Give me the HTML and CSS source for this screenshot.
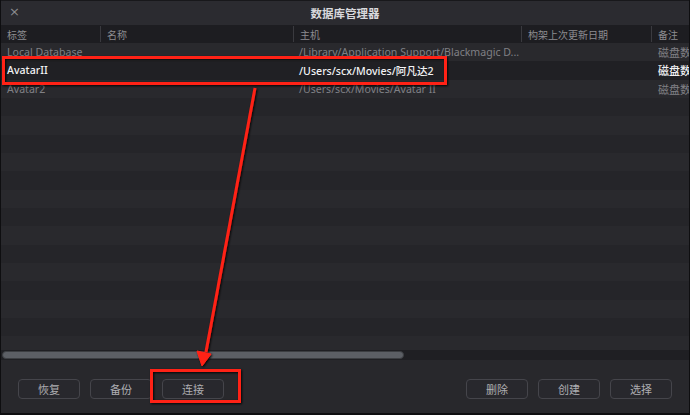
FILE: index.html
```html
<!DOCTYPE html>
<html lang="zh">
<head>
<meta charset="utf-8">
<title>数据库管理器</title>
<link rel="stylesheet" href="styles.css">
</head>
<body>
<div class="window">
  <div class="titlebar">
    <span class="close">×</span>
    <span class="title">数据库管理器</span>
  </div>
  <div class="table">
    <div class="row head">
      <div class="c c1">标签</div>
      <div class="c c2">名称</div>
      <div class="c c3">主机</div>
      <div class="c c4">构架上次更新日期</div>
      <div class="c c5">备注</div>
    </div>
    <div class="body">
      <div class="row odd">
        <div class="c c1">Local Database</div>
        <div class="c c2"></div>
        <div class="c c3">/Library/Application Support/Blackmagic D...</div>
        <div class="c c4"></div>
        <div class="c c5">磁盘数</div>
      </div>
      <div class="row sel">
        <div class="c c1">AvatarII</div>
        <div class="c c2"></div>
        <div class="c c3">/Users/scx/Movies/阿凡达2</div>
        <div class="c c4"></div>
        <div class="c c5">磁盘数</div>
      </div>
      <div class="row odd">
        <div class="c c1">Avatar2</div>
        <div class="c c2"></div>
        <div class="c c3">/Users/scx/Movies/Avatar II</div>
        <div class="c c4"></div>
        <div class="c c5">磁盘数</div>
      </div>
      <div class="row even"></div>
      <div class="row odd"></div>
      <div class="row even"></div>
      <div class="row odd"></div>
      <div class="row even"></div>
      <div class="row odd"></div>
      <div class="row even"></div>
      <div class="row odd"></div>
      <div class="row even"></div>
      <div class="row odd"></div>
      <div class="row even"></div>
      <div class="row odd"></div>
      <div class="row even"></div>
      <div class="row odd"></div>
    </div>
  </div>
  <div class="hscroll"><div class="thumb"></div></div>
  <div class="footer">
    <div class="group">
      <button class="btn">恢复</button>
      <button class="btn">备份</button>
      <button class="btn">连接</button>
    </div>
    <div class="group">
      <button class="btn">删除</button>
      <button class="btn">创建</button>
      <button class="btn">选择</button>
    </div>
  </div>
  <svg class="overlay" width="690" height="415" viewBox="0 0 690 415">
    <defs>
      <filter id="sh" x="-10%" y="-10%" width="120%" height="120%">
        <feDropShadow dx="1" dy="1" stdDeviation="1" flood-color="#000" flood-opacity="0.9"/>
      </filter>
    </defs>
    <g filter="url(#sh)" stroke="#ff2216" fill="none" stroke-width="3">
      <rect x="3.5" y="57.5" width="442" height="26"/>
      <rect x="151.5" y="370.5" width="88" height="31"/>
      <line x1="255" y1="88" x2="206" y2="352"/>
      <polygon points="197,351 211,354 202,366" fill="#ff2216" stroke="#ff2216" stroke-width="1" stroke-linejoin="round"/>
    </g>
  </svg>
</div>
</body>
</html>
```
FILE: styles.css
```css
* { box-sizing: border-box; }
html, body { margin: 0; padding: 0; background: #0b0b0d; }
body {
  width: 690px;
  height: 415px;
  overflow: hidden;
  font-family: "Noto Sans", "Noto Sans CJK SC", sans-serif;
}
.window {
  position: relative;
  width: 690px;
  height: 415px;
  background: #28282c;
  border-left: 1px solid #0e0e10;
  border-right: 1px solid #0e0e10;
  border-bottom: 2px solid #0e0e10;
  display: flex;
  flex-direction: column;
}
.titlebar {
  height: 25px;
  flex: none;
  background: #2b2b30;
  display: flex;
  align-items: center;
  justify-content: center;
  position: relative;
  border-top: 1px solid #18181b;
}
.close {
  position: absolute;
  left: 8px;
  top: 3px;
  color: #8a8a8e;
  font-family: "DejaVu Sans", sans-serif;
  font-size: 13px;
  line-height: 16px;
}
.title {
  color: #d8d8dc;
  font-size: 11.5px;
  font-weight: bold;
  font-family: "Noto Sans CJK SC", sans-serif;
}
.table {
  flex: none;
  height: 325px;
  overflow: hidden;
  background: #27272b;
}
.row {
  display: flex;
  height: 18.33px;
  align-items: center;
  font-size: 10.6px;
  color: #808085;
  white-space: nowrap;
}
.row.head {
  height: 18px;
  background: #1d1d21;
  color: #8c8c90;
  font-size: 10px;
  font-family: "Noto Sans CJK SC", sans-serif;
}
.row.odd { background: #29292d; }
.row.even { background: #252529; }
.row.sel { background: #202024; color: #f2f2f4; font-weight: 500; }
.c {
  padding-left: 6px;
  overflow: hidden;
  height: 100%;
  display: flex;
  align-items: center;
}
.c1 { width: 99px; }
.c2 { width: 193px; }
.c3 { width: 228px; }
.c4 { width: 130px; }
.c5 { flex: 1; }
.head .c + .c { border-left: 1px solid #3a3a3f; }
.head .c { height: 16px; }
.body .c1 { width: 100px; }
.body .c2 { width: 194px; }
.body .c3 { width: 229px; padding-left: 4px; }
.body .c4 { width: 131px; }
.body .c5 { padding-left: 3px; font-size: 11px; }
.hscroll {
  flex: none;
  height: 10px;
  padding: 1px;
  background: #1f1f23;
}
.thumb {
  width: 402px;
  height: 8px;
  border-radius: 4px;
  background: #5c5f65;
  border: 1px solid #3c3e42;
}
.footer {
  flex: 1;
  display: flex;
  justify-content: space-between;
  align-items: flex-start;
  padding: 19px 17px 0 17px;
  background: #28282c;
}
.group { display: flex; gap: 10px; }
.btn {
  width: 62px;
  height: 20px;
  background: #28282d;
  border: 1px solid #45454b;
  border-radius: 4px;
  color: #aeaeb2;
  font-family: "Noto Sans CJK SC", sans-serif;
  font-size: 11px;
  padding: 0;
  line-height: 18px;
}
.overlay {
  position: absolute;
  left: -1px;
  top: 0;
  pointer-events: none;
}
```
